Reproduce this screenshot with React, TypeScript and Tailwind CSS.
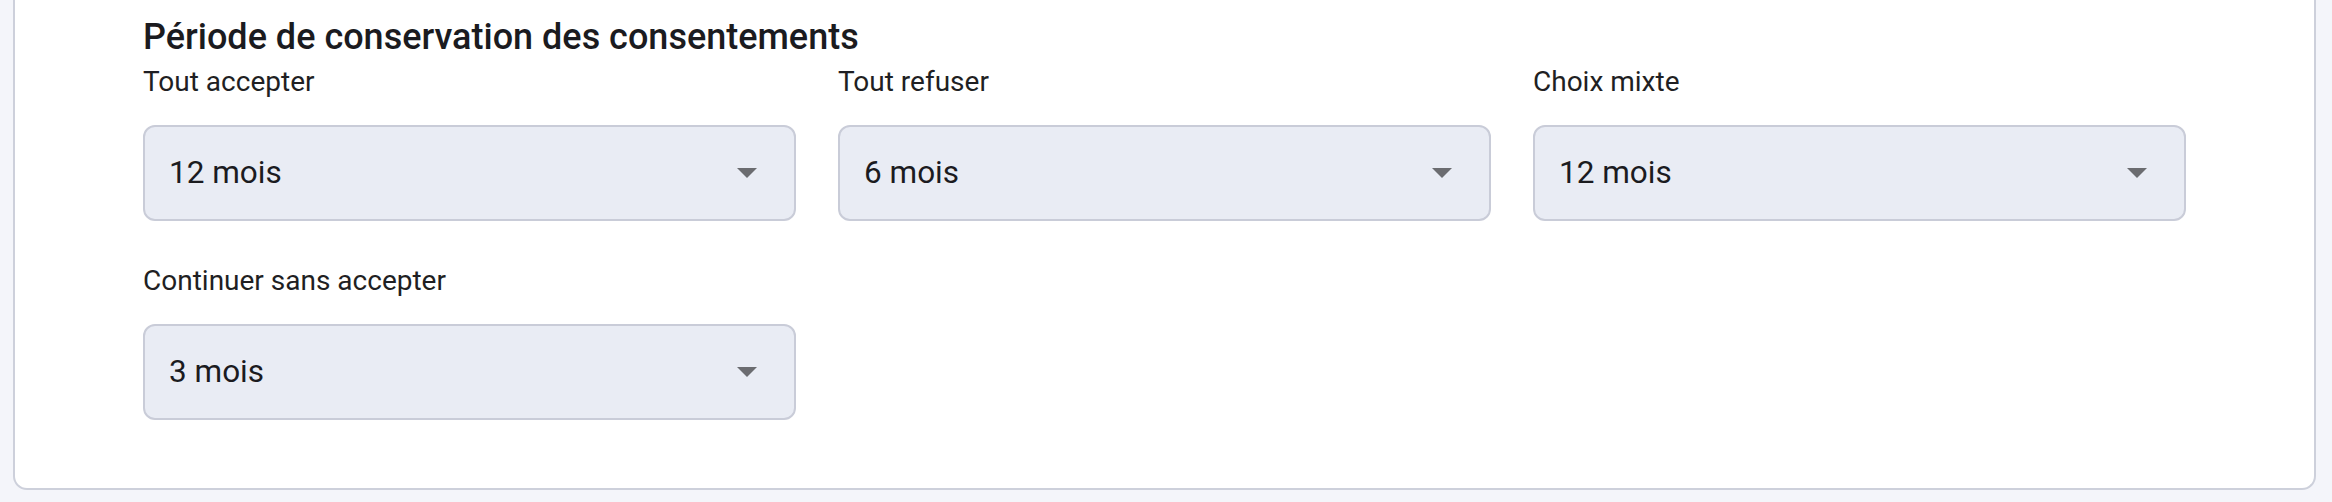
import React from "react";

const fields = [
  { label: "Tout accepter", value: "12 mois" },
  { label: "Tout refuser", value: "6 mois" },
  { label: "Choix mixte", value: "12 mois" },
  { label: "Continuer sans accepter", value: "3 mois" },
];

function Caret() {
  return (
    <svg width="20" height="10" viewBox="0 0 20 10" className="shrink-0">
      <path d="M0 0 L20 0 L10 10 Z" fill="#6b6c70" />
    </svg>
  );
}

export default function App() {
  return (
    <div
      className="min-h-screen bg-[#f4f5fa] pl-[13px] pr-[16px] pb-[14px]"
      style={{ fontFamily: "Roboto, 'Noto Sans', sans-serif" }}
    >
      <div className="bg-white border-2 border-t-0 border-[#cdd0db] rounded-b-[14px] px-[128px] pt-[14px] pb-[68px]">
        <h2 className="text-[36px] leading-[47px] font-medium text-[#1b1b1f]">
          Période de conservation des consentements
        </h2>
        <div className="grid grid-cols-3 gap-x-[42px] gap-y-[39px]">
          {fields.map((f, i) => (
            <div key={i} className="flex flex-col">
              <label className="text-[28px] leading-[42px] text-[#1f1f23]">
                {f.label}
              </label>
              <div className="mt-[22px] h-[96px] flex items-center justify-between bg-[#e9ecf4] border-2 border-[#c9ccd8] rounded-[12px] pl-[24px] pr-[37px]">
                <span className="text-[31.5px] text-[#1b1b1f]">{f.value}</span>
                <Caret />
              </div>
            </div>
          ))}
        </div>
      </div>
    </div>
  );
}
